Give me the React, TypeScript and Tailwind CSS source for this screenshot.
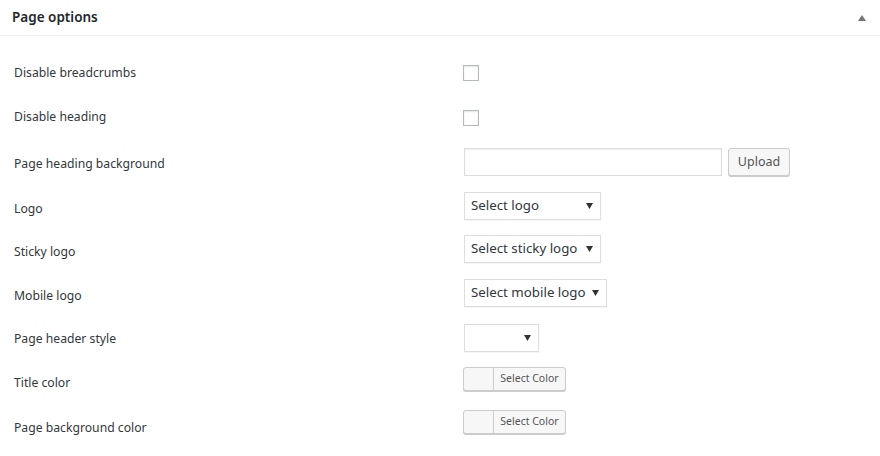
import React from "react";

const font = { fontFamily: '"Noto Sans", "Open Sans", sans-serif' };

function Row({ h, label, lift = "", children }: { h: string; label: string; lift?: string; children?: React.ReactNode }) {
  return (
    <div className={`flex items-center ${h}`}>
      <div className="w-[464px] shrink-0 pl-[14px] text-[12.2px] text-[#32373c]">{label}</div>
      <div className={`flex items-center ${lift}`}>{children}</div>
    </div>
  );
}

function Checkbox() {
  return <div className="w-4 h-4 -ml-px border border-[#b4b9be] bg-white shadow-[inset_0_1px_2px_rgba(0,0,0,0.1)]" />;
}

function Select({ w, text }: { w: string; text?: string }) {
  return (
    <div className={`${w} h-[28px] border border-[#ddd] bg-white flex items-center justify-between pl-[6px] pr-[7px] shadow-[0_1px_1px_rgba(0,0,0,0.04)]`}>
      <span className="text-[13.3px] text-[#32373c] whitespace-nowrap">{text ?? ""}</span>
      <svg width="7" height="6" viewBox="0 0 7 6"><path d="M0 0H7L3.5 6Z" fill="#333" /></svg>
    </div>
  );
}

function ColorBtn() {
  return (
    <div className="flex h-[24px] w-[103px] border border-[#ccc] rounded-[3px] bg-[#f7f7f7] shadow-[0_1px_0_#ccc] -ml-px">
      <div className="w-[30px] border-r border-[#ccc]" />
      <div className="flex-1 flex items-center justify-center text-[10.5px] text-[#555]">Select Color</div>
    </div>
  );
}

export default function App() {
  return (
    <div className="w-[880px] h-[456px] bg-white overflow-hidden" style={font}>
      <div className="h-[36px] border-b border-[#eee] flex items-center justify-between pl-[12px] pr-[14px]">
        <span className="text-[13.5px] font-semibold text-[#23282d]">Page options</span>
        <svg width="8" height="6" viewBox="0 0 8 6"><path d="M4 0L8 6H0Z" fill="#72777c" /></svg>
      </div>
      <div className="pt-[15px]">
        <Row h="h-[44px]" label="Disable breadcrumbs"><Checkbox /></Row>
        <Row h="h-[45px]" label="Disable heading"><Checkbox /></Row>
        <Row h="h-[48px]" label="Page heading background" lift="mb-[4px]">
          <div className="w-[258px] h-[28px] border border-[#ddd] bg-white shadow-[inset_0_1px_2px_rgba(0,0,0,0.07)]" />
          <div className="ml-[6px] w-[62px] h-[28px] border border-[#ccc] rounded-[3px] bg-[#f7f7f7] shadow-[0_1px_0_#ccc] flex items-center justify-center text-[12.5px] text-[#555]">Upload</div>
        </Row>
        <Row h="h-[42px]" label="Logo" lift="mb-[6px]"><Select w="w-[137px]" text="Select logo" /></Row>
        <Row h="h-[44px]" label="Sticky logo" lift="mb-[6px]"><Select w="w-[137px]" text="Select sticky logo" /></Row>
        <Row h="h-[44px]" label="Mobile logo" lift="mb-[6px]"><Select w="w-[143px]" text="Select mobile logo" /></Row>
        <Row h="h-[43px]" label="Page header style" lift="mb-[4px]"><Select w="w-[75px]" /></Row>
        <Row h="h-[45px]" label="Title color" lift="mb-[10px]"><ColorBtn /></Row>
        <Row h="h-[44px]" label="Page background color" lift="mb-[12px]"><ColorBtn /></Row>
      </div>
    </div>
  );
}
